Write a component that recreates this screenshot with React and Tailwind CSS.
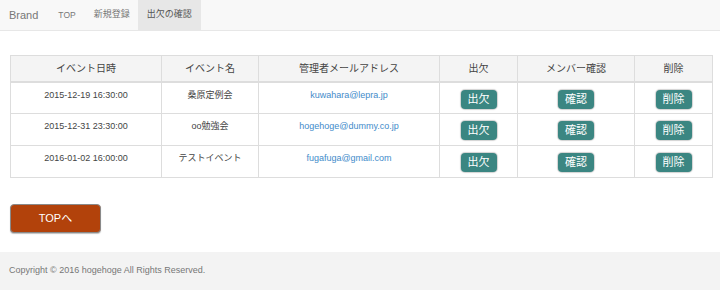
import React from 'react';

const events = [
  { date: '2015-12-19 16:30:00', name: '桑原定例会', email: 'kuwahara@lepra.jp' },
  { date: '2015-12-31 23:30:00', name: 'oo勉強会', email: 'hogehoge@dummy.co.jp' },
  { date: '2016-01-02 16:00:00', name: 'テストイベント', email: 'fugafuga@gmail.com' },
];

const font = { fontFamily: '"Liberation Sans", Arial, "Noto Sans CJK JP", sans-serif' };

const TealButton = ({ children }) => (
  <button className="h-[19px] px-[7px] rounded-[4px] bg-[#3b8682] text-white text-[11px] leading-[19px] shadow-[0_0_1px_1px_rgba(0,0,0,0.18)]">
    {children}
  </button>
);

const App = () => {
  return (
    <div className="w-[720px] h-[290px] bg-white flex flex-col text-[#333]" style={font}>
      {/* navbar */}
      <nav className="h-[31px] bg-[#f8f8f8] border-b border-[#e7e7e7] flex items-stretch text-[#777]">
        <span className="pl-[9px] pr-[10px] flex items-center text-[11px]">Brand</span>
        <span className="pl-[10px] pr-[9px] flex items-center text-[8.5px]">TOP</span>
        <span className="pl-[9px] pr-[8px] flex items-center text-[9px]">新規登録</span>
        <span className="px-[9px] flex items-center text-[9px] bg-[#e7e7e7] text-[#555]">出欠の確認</span>
      </nav>

      {/* table */}
      <div className="px-[10px] pt-[24px]">
        <table className="w-[702px] border-collapse text-[9px] table-fixed">
          <colgroup>
            <col className="w-[151px]" />
            <col className="w-[97px]" />
            <col className="w-[181px]" />
            <col className="w-[78px]" />
            <col className="w-[117px]" />
            <col className="w-[78px]" />
          </colgroup>
          <thead>
            <tr className="bg-[#f4f4f4] h-[26px]">
              {['イベント日時', 'イベント名', '管理者メールアドレス', '出欠', 'メンバー確認', '削除'].map((h) => (
                <th key={h} className="border border-[#ddd] border-b-2 font-normal text-[10px] text-[#444] align-middle">
                  {h}
                </th>
              ))}
            </tr>
          </thead>
          <tbody>
            {events.map((ev) => (
              <tr key={ev.date} className="h-[32px]">
                <td className="border border-[#ddd] text-center align-top pt-[6px] text-[#444]">{ev.date}</td>
                <td className="border border-[#ddd] text-center align-top pt-[6px] text-[#444]">{ev.name}</td>
                <td className="border border-[#ddd] text-center align-top pt-[6px]">
                  <a className="text-[#428bca]">{ev.email}</a>
                </td>
                <td className="border border-[#ddd] text-center align-top pt-[7px]">
                  <TealButton>出欠</TealButton>
                </td>
                <td className="border border-[#ddd] text-center align-top pt-[7px]">
                  <TealButton>確認</TealButton>
                </td>
                <td className="border border-[#ddd] text-center align-top pt-[7px]">
                  <TealButton>削除</TealButton>
                </td>
              </tr>
            ))}
          </tbody>
        </table>
      </div>

      <div className="px-[10px] pt-[26px]">
        <button className="w-[91px] h-[29px] rounded-[4px] bg-[#b2420b] text-white text-[11px] border border-[#8a8a8a] shadow-[0_1px_1px_rgba(0,0,0,0.25)]">
          TOPへ
        </button>
      </div>

      {/* footer */}
      <footer className="mt-auto h-[38px] bg-[#f3f3f3] flex items-center pl-[9px] text-[9px] text-[#777]">
        Copyright © 2016 hogehoge All Rights Reserved.
      </footer>
    </div>
  );
};

export default App;
